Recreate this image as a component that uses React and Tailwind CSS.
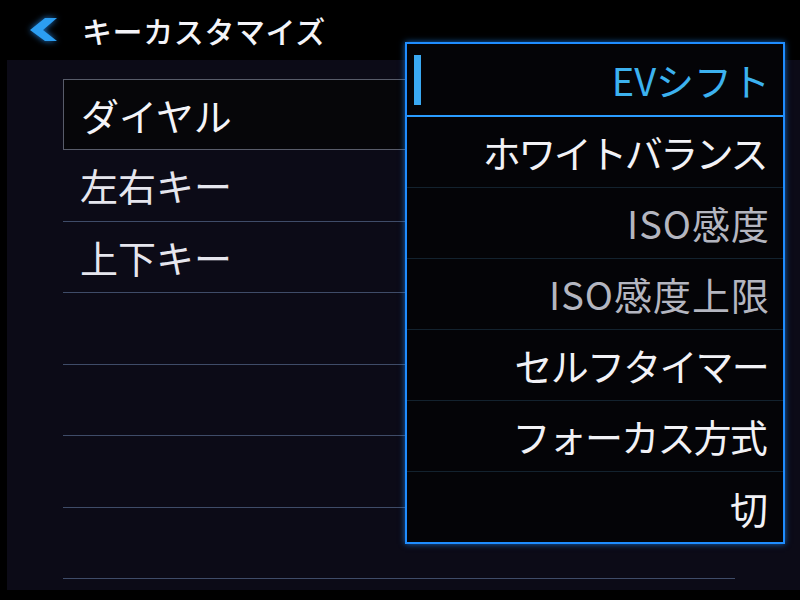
import React from "react";

const leftRows = ["左右キー", "上下キー", "", "", "", ""];

const menuItems = [
  { label: "ホワイトバランス", tone: "text-[#f2f2f6]", track: "tracking-[-2.5px]", pad: "pr-[17px]" },
  { label: "ISO感度", tone: "text-[#b4b6c0]", track: "tracking-[1px]", pad: "pr-[13px]" },
  { label: "ISO感度上限", tone: "text-[#b4b6c0]", track: "tracking-[1px]", pad: "pr-[13px]" },
  { label: "セルフタイマー", tone: "text-[#f2f2f6]", track: "tracking-[-1.8px]", pad: "pr-[15px]" },
  { label: "フォーカス方式", tone: "text-[#f2f2f6]", track: "tracking-[-1.8px]", pad: "pr-[17px]" },
  { label: "切", tone: "text-[#f2f2f6]", track: "", pad: "pr-[15px]" },
];

const font = {
  fontFamily: '"Noto Sans CJK JP", "Noto Sans", sans-serif',
};

function BackChevron() {
  return (
    <svg width="30" height="26" viewBox="0 0 30 26" className="drop-shadow-[0_0_3px_rgba(40,150,255,0.8)]">
      <polygon points="28,1 16,1 1,13 16,24 28,24 14,13" fill="#2c9ef2" />
    </svg>
  );
}

export default function App() {
  return (
    <div className="relative w-[800px] h-[600px] bg-black overflow-hidden" style={font}>
      {/* header */}
      <div className="h-[60px] flex items-center pl-[29px] gap-[23px]">
        <BackChevron />
        <span className="text-[30px] leading-none font-medium text-[#f4f4f8] tracking-[0.6px]">
          キーカスタマイズ
        </span>
      </div>

      {/* body panel */}
      <div className="flex h-[530px]">
        <div className="w-[7px] bg-black" />
        <div className="flex-1 bg-[#0c0b17] pt-[19px] pl-[56px]">
          <div className="w-[672px]">
            <div className="h-[71px] border border-[#585c6a] bg-[#060609] flex items-center pl-[17px]">
              <span className="text-[38px] leading-none text-[#f4f4f8]">ダイヤル</span>
            </div>
            {leftRows.map((label, i) => (
              <div
                key={i}
                className="h-[71.5px] border-b border-[#3f4c68] flex items-center pl-[17px]"
              >
                <span className="text-[38px] leading-none text-[#e6e6ee]">{label}</span>
              </div>
            ))}
          </div>
        </div>
      </div>
      <div className="absolute left-0 bottom-0 w-full h-[10px] bg-black" />

      {/* dropdown menu */}
      <div className="absolute left-[405px] top-[42px] w-[380px] h-[502px] border-2 border-[#1f8dff] bg-[#040407] shadow-[0_0_6px_rgba(30,140,255,0.7)] flex flex-col">
        <div className="relative h-[73px] border-b-2 border-[#2a9cff] flex items-center justify-end pr-[13px] shrink-0">
          <div className="absolute left-[7px] top-[11px] w-[7px] h-[50px] bg-[#3aa9f2]" />
          <span className="text-[38px] leading-none text-[#3cb2ef]">EVシフト</span>
        </div>
        {menuItems.map((item, i) => (
          <div
            key={item.label}
            className={`h-[71px] flex items-center justify-end shrink-0 ${item.pad} ${
              i < menuItems.length - 1 ? "border-b border-[#13222e]" : ""
            }`}
          >
            <span className={`text-[38px] leading-none ${item.tone} ${item.track}`}>{item.label}</span>
          </div>
        ))}
      </div>
    </div>
  );
}
